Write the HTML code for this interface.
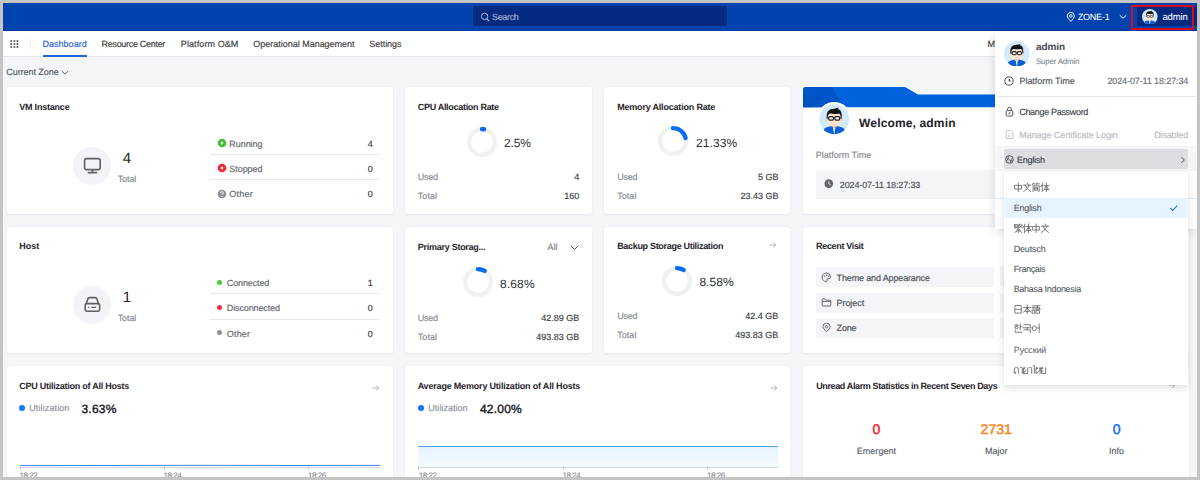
<!DOCTYPE html>
<html><head><meta charset="utf-8"><style>
html,body{margin:0;padding:0;}
body{width:1200px;height:480px;position:relative;overflow:hidden;background:#c4c4c4;font-family:"Liberation Sans", sans-serif;}
.t{position:absolute;white-space:pre;line-height:0;font-family:"Liberation Sans", sans-serif;text-rendering:geometricPrecision;}
svg{display:block}
</style></head><body>
<div style="position:absolute;left:3px;top:3px;width:1194px;height:28px;background:#0043ae;"></div>
<div style="position:absolute;left:3px;top:30px;width:1194px;height:1px;background:#003a9c;"></div>
<div style="position:absolute;left:473px;top:6.2px;width:254px;height:19.8px;background:#052b80;border-radius:1px;"></div>
<svg style="position:absolute;left:480px;top:12px;" width="10" height="10" viewBox="0 0 10 10"><circle cx="4.6" cy="4.4" r="3.2" fill="none" stroke="#a9b6d6" stroke-width="1"/><path d="M6.9 6.8 L9 8.9" stroke="#a9b6d6" stroke-width="1.1" stroke-linecap="round"/></svg>
<div class="t" style="left:492.05px;top:16.90px;font-size:9px;font-weight:normal;color:#a3b1d4;letter-spacing:-0.344px;-webkit-text-stroke:0.16px #a3b1d4;">Search</div>
<svg style="position:absolute;left:1066px;top:12px;" width="10" height="10" viewBox="0 0 10 10"><path d="M4.8 9.4 C2.4 7 1.3 5.3 1.3 3.9 A3.5 3.5 0 0 1 8.3 3.9 C8.3 5.3 7.2 7 4.8 9.4 Z" fill="none" stroke="#fff" stroke-width="0.95"/><circle cx="4.8" cy="4" r="1.3" fill="none" stroke="#fff" stroke-width="0.9"/></svg>
<div class="t" style="left:1077.85px;top:16.70px;font-size:9px;font-weight:normal;color:#ffffff;letter-spacing:-0.241px;-webkit-text-stroke:0.05px #ffffff;">ZONE-1</div>
<svg style="position:absolute;left:1119px;top:14px;" width="8" height="6" viewBox="0 0 8 6"><path d="M1 1.5 L4 4.3 L7 1.5" fill="none" stroke="#fff" stroke-width="1" stroke-linecap="round"/></svg>
<div style="position:absolute;left:1137px;top:7px;width:60px;height:19px;background:#032a7d;"></div>
<svg style="position:absolute;left:1142.2px;top:8.599999999999998px" width="15.6" height="15.6" viewBox="0.0 0.0 32.0 32.0"><defs><clipPath id="c11500164"><circle cx="16" cy="16" r="16"/></clipPath></defs>
<circle cx="16" cy="16" r="16" fill="#d2ebfb"/>
<g clip-path="url(#c11500164)">
<path d="M3.5 34 L4.5 27.5 Q5.5 25.2 9 24.4 L13 23.2 L16 24.2 L19 23.2 L23 24.4 Q26.5 25.2 27.5 27.5 L28.5 34 Z" fill="#0c5fd7"/>
<path d="M14.6 24 L16 33 L17.4 24 L16 25 Z" fill="#e9f3fc"/>
<path d="M12.6 19.5 L12.6 23.4 Q16 26.4 19.4 23.4 L19.4 19.5 Z" fill="#f2c5a2"/>
<path d="M8.6 12 Q8.6 6.8 16 6.8 Q23.4 6.8 23.4 12 L23.4 16.5 Q23.4 23 16 23 Q8.6 23 8.6 16.5 Z" fill="#fce5d3"/>
<ellipse cx="8.2" cy="16.4" rx="1.2" ry="1.8" fill="#f6cfb2"/>
<ellipse cx="23.8" cy="16.4" rx="1.2" ry="1.8" fill="#f6cfb2"/>
<path d="M8 15.5 Q7.4 9.5 9.8 6.9 Q12 4.4 16.5 4.8 Q19 4.2 20.6 3.6 Q20.4 4.8 19.8 5.2 Q22.8 5.6 23.6 8.6 Q24.4 11.5 24 15.5 L23.2 15.5 Q23 11.2 21.4 9.8 Q17.5 11 11.2 10 Q9.2 11 8.8 15.5 Z" fill="#141414"/>
<rect x="10.1" y="13.3" width="5.2" height="3.8" rx="1.5" fill="#f4f6f8" stroke="#1e1e1e" stroke-width="1.3"/>
<rect x="16.7" y="13.3" width="5.2" height="3.8" rx="1.5" fill="#f4f6f8" stroke="#1e1e1e" stroke-width="1.3"/>
<path d="M15.3 14.6 L16.7 14.6 M8.6 14.4 L10.1 14.6 M21.9 14.6 L23.4 14.4" stroke="#1e1e1e" stroke-width="0.9"/>
<path d="M15.4 19.6 Q16 20.1 16.6 19.6" fill="none" stroke="#e0a88a" stroke-width="0.5"/>
</g></svg>
<div class="t" style="left:1162.43px;top:17.70px;font-size:9.5px;font-weight:normal;color:#ffffff;letter-spacing:-0.155px;-webkit-text-stroke:0.05px #ffffff;">admin</div>
<div style="position:absolute;left:3px;top:31px;width:1194px;height:25px;background:#ffffff;"></div>
<div style="position:absolute;left:3px;top:56px;width:1194px;height:1px;background:#e4e6eb;"></div>
<svg style="position:absolute;left:9px;top:39px;" width="11" height="11" viewBox="0 0 11 11"><rect x="1.4999999999999998" y="1.3" width="1.6" height="1.6" fill="#3a3a3a"/><rect x="1.4999999999999998" y="4.2" width="1.6" height="1.6" fill="#3a3a3a"/><rect x="1.4999999999999998" y="7.2" width="1.6" height="1.6" fill="#3a3a3a"/><rect x="4.6000000000000005" y="1.3" width="1.6" height="1.6" fill="#3a3a3a"/><rect x="4.6000000000000005" y="4.2" width="1.6" height="1.6" fill="#3a3a3a"/><rect x="4.6000000000000005" y="7.2" width="1.6" height="1.6" fill="#3a3a3a"/><rect x="7.6000000000000005" y="1.3" width="1.6" height="1.6" fill="#3a3a3a"/><rect x="7.6000000000000005" y="4.2" width="1.6" height="1.6" fill="#3a3a3a"/><rect x="7.6000000000000005" y="7.2" width="1.6" height="1.6" fill="#3a3a3a"/></svg>
<div style="position:absolute;left:29.5px;top:39px;width:1.5px;height:8.299999999999997px;background:#e9eaee;"></div>
<div class="t" style="left:42.55px;top:44.00px;font-size:9px;font-weight:normal;color:#1f65d6;letter-spacing:0.010px;-webkit-text-stroke:0.16px #1f65d6;">Dashboard</div>
<div style="position:absolute;left:43px;top:55px;width:43.5px;height:2px;background:#1f65d6;"></div>
<div class="t" style="left:101.55px;top:44.00px;font-size:9px;font-weight:normal;color:#3c3c3c;letter-spacing:-0.303px;-webkit-text-stroke:0.16px #3c3c3c;">Resource Center</div>
<div class="t" style="left:180.85px;top:44.00px;font-size:9px;font-weight:normal;color:#3c3c3c;letter-spacing:0.090px;-webkit-text-stroke:0.16px #3c3c3c;">Platform O&M</div>
<div class="t" style="left:253.35px;top:44.00px;font-size:9px;font-weight:normal;color:#3c3c3c;letter-spacing:-0.017px;-webkit-text-stroke:0.16px #3c3c3c;">Operational Management</div>
<div class="t" style="left:369.25px;top:44.00px;font-size:9px;font-weight:normal;color:#3c3c3c;letter-spacing:-0.032px;-webkit-text-stroke:0.16px #3c3c3c;">Settings</div>
<div class="t" style="left:987.45px;top:44.20px;font-size:9px;font-weight:normal;color:#3c3c3c;letter-spacing:0.000px;-webkit-text-stroke:0.16px #3c3c3c;">M</div>
<div style="position:absolute;left:3px;top:57px;width:1194px;height:420px;background:#f4f6fa;"></div>
<div class="t" style="left:6.25px;top:72.30px;font-size:9px;font-weight:normal;color:#555a62;letter-spacing:-0.056px;-webkit-text-stroke:0.16px #555a62;">Current Zone</div>
<svg style="position:absolute;left:61px;top:70px;" width="8" height="6" viewBox="0 0 8 6"><path d="M1 1.3 L4 4.2 L7 1.3" fill="none" stroke="#555" stroke-width="1" stroke-linecap="round"/></svg>
<div style="position:absolute;left:7px;top:87px;width:385.5px;height:127px;background:#fff;border-radius:3px;box-shadow:0 0.5px 2px rgba(30,40,60,0.08);"></div>
<div style="position:absolute;left:405px;top:87px;width:186.70000000000005px;height:127px;background:#fff;border-radius:3px;box-shadow:0 0.5px 2px rgba(30,40,60,0.08);"></div>
<div style="position:absolute;left:604.2px;top:87px;width:186.19999999999993px;height:127px;background:#fff;border-radius:3px;box-shadow:0 0.5px 2px rgba(30,40,60,0.08);"></div>
<div style="position:absolute;left:803px;top:94.5px;width:386px;height:119.5px;background:#fff;border-radius:3px;box-shadow:0 0.5px 2px rgba(30,40,60,0.08);"></div>
<div style="position:absolute;left:7px;top:226.7px;width:385.5px;height:126.60000000000002px;background:#fff;border-radius:3px;box-shadow:0 0.5px 2px rgba(30,40,60,0.08);"></div>
<div style="position:absolute;left:405px;top:226.7px;width:186.70000000000005px;height:126.60000000000002px;background:#fff;border-radius:3px;box-shadow:0 0.5px 2px rgba(30,40,60,0.08);"></div>
<div style="position:absolute;left:604.2px;top:226.7px;width:186.19999999999993px;height:126.60000000000002px;background:#fff;border-radius:3px;box-shadow:0 0.5px 2px rgba(30,40,60,0.08);"></div>
<div style="position:absolute;left:803px;top:226.7px;width:386px;height:126.60000000000002px;background:#fff;border-radius:3px;box-shadow:0 0.5px 2px rgba(30,40,60,0.08);"></div>
<div style="position:absolute;left:7px;top:365.8px;width:385.5px;height:134.2px;background:#fff;border-radius:3px;box-shadow:0 0.5px 2px rgba(30,40,60,0.08);"></div>
<div style="position:absolute;left:405px;top:365.8px;width:385.4px;height:134.2px;background:#fff;border-radius:3px;box-shadow:0 0.5px 2px rgba(30,40,60,0.08);"></div>
<div style="position:absolute;left:803px;top:365.8px;width:386px;height:134.2px;background:#fff;border-radius:3px;box-shadow:0 0.5px 2px rgba(30,40,60,0.08);"></div>
<div class="t" style="left:19.25px;top:107.00px;font-size:9px;font-weight:bold;color:#1f2329;letter-spacing:-0.211px;">VM Instance</div>
<div style="position:absolute;left:73.2px;top:146.6px;width:38px;height:38px;border-radius:50%;background:#f3f4f7"></div>
<svg style="position:absolute;left:83px;top:157px;" width="19" height="17" viewBox="0 0 19 17"><rect x="1.6" y="1.6" width="15.6" height="11" rx="2" fill="none" stroke="#5d6168" stroke-width="1.6"/><path d="M9.4 12.8 L9.4 15.6 M5.2 15.6 L13.6 15.6" stroke="#5d6168" stroke-width="1.6" stroke-linecap="round"/></svg>
<div class="t" style="left:122.73px;top:158.75px;font-size:15px;font-weight:normal;color:#1f2329;letter-spacing:0.000px;">4</div>
<div class="t" style="left:117.65px;top:178.50px;font-size:9px;font-weight:normal;color:#868a92;letter-spacing:-0.076px;-webkit-text-stroke:0.16px #868a92;">Total</div>
<svg style="position:absolute;left:217.3px;top:138.0px;" width="10" height="10" viewBox="0 0 10 10"><circle cx="5" cy="5" r="4.3" fill="#42c23b"/><path d="M3.9 3.2 L6.6 5 L3.9 6.8 Z" fill="#fff"/></svg>
<div class="t" style="left:229.35px;top:143.60px;font-size:9px;font-weight:normal;color:#63676e;letter-spacing:-0.070px;-webkit-text-stroke:0.16px #63676e;">Running</div>
<div class="t" style="left:367.74px;top:143.60px;font-size:9px;font-weight:normal;color:#3a3d42;letter-spacing:0.000px;-webkit-text-stroke:0.16px #3a3d42;">4</div>
<div style="position:absolute;left:209.8px;top:154.0px;width:170.2px;height:1.0px;background:#e6e8ec;"></div>
<svg style="position:absolute;left:217.3px;top:163.3px;" width="10" height="10" viewBox="0 0 10 10"><circle cx="5" cy="5" r="4.3" fill="#f2293a"/><rect x="3.9" y="3.9" width="2.2" height="2.2" fill="#fff"/></svg>
<div class="t" style="left:229.35px;top:168.90px;font-size:9px;font-weight:normal;color:#63676e;letter-spacing:-0.070px;-webkit-text-stroke:0.16px #63676e;">Stopped</div>
<div class="t" style="left:367.74px;top:168.90px;font-size:9px;font-weight:normal;color:#3a3d42;letter-spacing:0.000px;-webkit-text-stroke:0.16px #3a3d42;">0</div>
<div style="position:absolute;left:209.8px;top:179.4px;width:170.2px;height:1.0px;background:#e6e8ec;"></div>
<svg style="position:absolute;left:217.3px;top:188.6px;" width="10" height="10" viewBox="0 0 10 10"><circle cx="5" cy="5" r="4.3" fill="#8c8f94"/><path d="M3.6 4 Q3.6 2.6 5 2.6 Q6.4 2.6 6.4 3.9 Q6.4 4.7 5 5.3 L5 6" fill="none" stroke="#fff" stroke-width="0.9"/><circle cx="5" cy="7.3" r="0.55" fill="#fff"/></svg>
<div class="t" style="left:229.35px;top:194.20px;font-size:9px;font-weight:normal;color:#63676e;letter-spacing:0.199px;-webkit-text-stroke:0.16px #63676e;">Other</div>
<div class="t" style="left:367.74px;top:194.20px;font-size:9px;font-weight:normal;color:#3a3d42;letter-spacing:0.000px;-webkit-text-stroke:0.16px #3a3d42;">0</div>
<div class="t" style="left:19.25px;top:246.40px;font-size:9px;font-weight:bold;color:#1f2329;letter-spacing:0.003px;">Host</div>
<div style="position:absolute;left:73.2px;top:286.0px;width:38px;height:38px;border-radius:50%;background:#f3f4f7"></div>
<svg style="position:absolute;left:83px;top:296.4px;" width="19" height="17" viewBox="0 0 19 17"><path d="M3.2 8 L5 2.6 Q5.4 1.6 6.5 1.6 L12.3 1.6 Q13.4 1.6 13.8 2.6 L15.6 8" fill="none" stroke="#5d6168" stroke-width="1.6"/><rect x="2.2" y="7.6" width="14.4" height="7.6" rx="1.6" fill="none" stroke="#5d6168" stroke-width="1.6"/><path d="M5.2 11.4 L6.2 11.4 M8.4 11.4 L13.2 11.4" stroke="#5d6168" stroke-width="1.4"/></svg>
<div class="t" style="left:122.73px;top:298.15px;font-size:15px;font-weight:normal;color:#1f2329;letter-spacing:0.000px;">1</div>
<div class="t" style="left:117.65px;top:317.90px;font-size:9px;font-weight:normal;color:#868a92;letter-spacing:-0.076px;-webkit-text-stroke:0.16px #868a92;">Total</div>
<div style="position:absolute;left:217.2px;top:279.59999999999997px;width:5px;height:5px;border-radius:50%;background:#4cc93c"></div>
<div class="t" style="left:226.75px;top:283.00px;font-size:9px;font-weight:normal;color:#63676e;letter-spacing:-0.117px;-webkit-text-stroke:0.16px #63676e;">Connected</div>
<div class="t" style="left:367.74px;top:283.00px;font-size:9px;font-weight:normal;color:#3a3d42;letter-spacing:0.000px;-webkit-text-stroke:0.16px #3a3d42;">1</div>
<div style="position:absolute;left:209.8px;top:293.4px;width:170.2px;height:1.0px;background:#e6e8ec;"></div>
<div style="position:absolute;left:217.2px;top:304.9px;width:5px;height:5px;border-radius:50%;background:#f2293a"></div>
<div class="t" style="left:226.75px;top:308.30px;font-size:9px;font-weight:normal;color:#63676e;letter-spacing:-0.112px;-webkit-text-stroke:0.16px #63676e;">Disconnected</div>
<div class="t" style="left:367.74px;top:308.30px;font-size:9px;font-weight:normal;color:#3a3d42;letter-spacing:0.000px;-webkit-text-stroke:0.16px #3a3d42;">0</div>
<div style="position:absolute;left:209.8px;top:318.79999999999995px;width:170.2px;height:1.0px;background:#e6e8ec;"></div>
<div style="position:absolute;left:217.2px;top:330.2px;width:5px;height:5px;border-radius:50%;background:#8c8f94"></div>
<div class="t" style="left:226.75px;top:333.60px;font-size:9px;font-weight:normal;color:#63676e;letter-spacing:0.199px;-webkit-text-stroke:0.16px #63676e;">Other</div>
<div class="t" style="left:367.74px;top:333.60px;font-size:9px;font-weight:normal;color:#3a3d42;letter-spacing:0.000px;-webkit-text-stroke:0.16px #3a3d42;">0</div>
<div class="t" style="left:417.75px;top:107.30px;font-size:9px;font-weight:bold;color:#1f2329;letter-spacing:-0.299px;">CPU Allocation Rate</div>
<svg style="position:absolute;left:465.6px;top:125.6px;" width="32" height="32" viewBox="0 0 32 32"><circle cx="16" cy="16" r="12.9" fill="none" stroke="#f0f1f3" stroke-width="4.4"/><path d="M16 3.0999999999999996 A12.9 12.9 0 0 1 18.018 3.259" fill="none" stroke="#0a6cf5" stroke-width="4.4" stroke-linecap="round"/></svg>
<div class="t" style="left:503.90px;top:142.80px;font-size:12px;font-weight:normal;color:#2b2f36;letter-spacing:-0.093px;">2.5%</div>
<div class="t" style="left:417.75px;top:177.00px;font-size:9px;font-weight:normal;color:#868a92;letter-spacing:-0.235px;-webkit-text-stroke:0.16px #868a92;">Used</div>
<div class="t" style="left:574.34px;top:177.00px;font-size:9px;font-weight:normal;color:#3a3d42;letter-spacing:0.000px;-webkit-text-stroke:0.16px #3a3d42;">4</div>
<div class="t" style="left:417.75px;top:195.70px;font-size:9px;font-weight:normal;color:#868a92;letter-spacing:0.074px;-webkit-text-stroke:0.16px #868a92;">Total</div>
<div class="t" style="left:564.33px;top:195.70px;font-size:9px;font-weight:normal;color:#3a3d42;letter-spacing:0.000px;-webkit-text-stroke:0.16px #3a3d42;">160</div>
<div class="t" style="left:617.15px;top:107.30px;font-size:9px;font-weight:bold;color:#1f2329;letter-spacing:-0.189px;">Memory Allocation Rate</div>
<svg style="position:absolute;left:657.4px;top:125.4px;" width="32" height="32" viewBox="0 0 32 32"><circle cx="16" cy="16" r="12.9" fill="none" stroke="#f0f1f3" stroke-width="4.4"/><path d="M16 3.0999999999999996 A12.9 12.9 0 0 1 28.559 13.052" fill="none" stroke="#0a6cf5" stroke-width="4.4" stroke-linecap="round"/></svg>
<div class="t" style="left:696.00px;top:142.50px;font-size:12px;font-weight:normal;color:#2b2f36;letter-spacing:0.075px;">21.33%</div>
<div class="t" style="left:617.15px;top:177.00px;font-size:9px;font-weight:normal;color:#868a92;letter-spacing:-0.235px;-webkit-text-stroke:0.16px #868a92;">Used</div>
<div class="t" style="left:757.94px;top:177.00px;font-size:9px;font-weight:normal;color:#3a3d42;letter-spacing:0.000px;-webkit-text-stroke:0.16px #3a3d42;">5 GB</div>
<div class="t" style="left:617.15px;top:195.70px;font-size:9px;font-weight:normal;color:#868a92;letter-spacing:0.074px;-webkit-text-stroke:0.16px #868a92;">Total</div>
<div class="t" style="left:740.43px;top:195.70px;font-size:9px;font-weight:normal;color:#3a3d42;letter-spacing:0.000px;-webkit-text-stroke:0.16px #3a3d42;">23.43 GB</div>
<div class="t" style="left:417.75px;top:247.30px;font-size:9px;font-weight:bold;color:#1f2329;letter-spacing:-0.264px;">Primary Storag...</div>
<div class="t" style="left:547.45px;top:247.30px;font-size:9px;font-weight:normal;color:#7d8189;letter-spacing:0.000px;-webkit-text-stroke:0.16px #7d8189;">All</div>
<svg style="position:absolute;left:570px;top:245px;" width="9" height="6" viewBox="0 0 9 6"><path d="M1.2 1.3 L4.5 4.5 L7.8 1.3" fill="none" stroke="#555" stroke-width="1" stroke-linecap="round"/></svg>
<svg style="position:absolute;left:461.5px;top:266.2px;" width="32" height="32" viewBox="0 0 32 32"><circle cx="16" cy="16" r="12.9" fill="none" stroke="#f0f1f3" stroke-width="4.4"/><path d="M16 3.0999999999999996 A12.9 12.9 0 0 1 22.692 4.971" fill="none" stroke="#0a6cf5" stroke-width="4.4" stroke-linecap="round"/></svg>
<div class="t" style="left:500.10px;top:283.80px;font-size:12px;font-weight:normal;color:#2b2f36;letter-spacing:0.112px;">8.68%</div>
<div class="t" style="left:417.75px;top:317.50px;font-size:9px;font-weight:normal;color:#868a92;letter-spacing:-0.235px;-webkit-text-stroke:0.16px #868a92;">Used</div>
<div class="t" style="left:541.33px;top:317.50px;font-size:9px;font-weight:normal;color:#3a3d42;letter-spacing:0.000px;-webkit-text-stroke:0.16px #3a3d42;">42.89 GB</div>
<div class="t" style="left:417.75px;top:336.70px;font-size:9px;font-weight:normal;color:#868a92;letter-spacing:0.074px;-webkit-text-stroke:0.16px #868a92;">Total</div>
<div class="t" style="left:536.33px;top:336.70px;font-size:9px;font-weight:normal;color:#3a3d42;letter-spacing:0.000px;-webkit-text-stroke:0.16px #3a3d42;">493.83 GB</div>
<div class="t" style="left:617.15px;top:246.20px;font-size:9px;font-weight:bold;color:#1f2329;letter-spacing:-0.309px;">Backup Storage Utilization</div>
<svg style="position:absolute;left:768px;top:241px;" width="10" height="8" viewBox="0 0 10 8"><path d="M1.6 4 L7.8 4 M5.2 1.4 L7.8 4 L5.2 6.6" fill="none" stroke="#a8acb2" stroke-width="0.9"/></svg>
<svg style="position:absolute;left:660.55px;top:265px;" width="32" height="32" viewBox="0 0 32 32"><circle cx="16" cy="16" r="12.9" fill="none" stroke="#f0f1f3" stroke-width="4.4"/><path d="M16 3.0999999999999996 A12.9 12.9 0 0 1 22.622 4.930" fill="none" stroke="#0a6cf5" stroke-width="4.4" stroke-linecap="round"/></svg>
<div class="t" style="left:699.40px;top:282.30px;font-size:12px;font-weight:normal;color:#2b2f36;letter-spacing:0.037px;">8.58%</div>
<div class="t" style="left:617.15px;top:316.20px;font-size:9px;font-weight:normal;color:#868a92;letter-spacing:-0.235px;-webkit-text-stroke:0.16px #868a92;">Used</div>
<div class="t" style="left:745.33px;top:316.20px;font-size:9px;font-weight:normal;color:#3a3d42;letter-spacing:0.000px;-webkit-text-stroke:0.16px #3a3d42;">42.4 GB</div>
<div class="t" style="left:617.15px;top:335.20px;font-size:9px;font-weight:normal;color:#868a92;letter-spacing:0.074px;-webkit-text-stroke:0.16px #868a92;">Total</div>
<div class="t" style="left:735.33px;top:335.20px;font-size:9px;font-weight:normal;color:#3a3d42;letter-spacing:0.000px;-webkit-text-stroke:0.16px #3a3d42;">493.83 GB</div>
<svg style="position:absolute;left:803px;top:87px;" width="386" height="21" viewBox="0 0 386 21"><defs><clipPath id="wb"><path d="M0 3 Q0 0 3 0 L386 0 L386 21 L0 21 Z"/></clipPath></defs><g clip-path="url(#wb)"><path d="M0 0 L102 0 L115 7.5 L386 7.5 L386 20.3 L0 20.3 Z" fill="#0063db"/><path d="M0 0 L29 0 L41 20.3 L0 20.3 Z" fill="#0055c9"/><path d="M0 20.3 L10 20.3 L18 8 L0 8 Z" fill="#0050bf" opacity="0.5"/></g></svg>
<svg style="position:absolute;left:816.8px;top:101.8px" width="34.4" height="34.4" viewBox="-2.3466666666666676 -2.3466666666666676 36.693333333333335 36.693333333333335"><circle cx="16" cy="16" r="18.346666666666668" fill="#fff"/><defs><clipPath id="c83401190"><circle cx="16" cy="16" r="16"/></clipPath></defs>
<circle cx="16" cy="16" r="16" fill="#d2ebfb"/>
<g clip-path="url(#c83401190)">
<path d="M3.5 34 L4.5 27.5 Q5.5 25.2 9 24.4 L13 23.2 L16 24.2 L19 23.2 L23 24.4 Q26.5 25.2 27.5 27.5 L28.5 34 Z" fill="#0c5fd7"/>
<path d="M14.6 24 L16 33 L17.4 24 L16 25 Z" fill="#e9f3fc"/>
<path d="M12.6 19.5 L12.6 23.4 Q16 26.4 19.4 23.4 L19.4 19.5 Z" fill="#f2c5a2"/>
<path d="M8.6 12 Q8.6 6.8 16 6.8 Q23.4 6.8 23.4 12 L23.4 16.5 Q23.4 23 16 23 Q8.6 23 8.6 16.5 Z" fill="#fce5d3"/>
<ellipse cx="8.2" cy="16.4" rx="1.2" ry="1.8" fill="#f6cfb2"/>
<ellipse cx="23.8" cy="16.4" rx="1.2" ry="1.8" fill="#f6cfb2"/>
<path d="M8 15.5 Q7.4 9.5 9.8 6.9 Q12 4.4 16.5 4.8 Q19 4.2 20.6 3.6 Q20.4 4.8 19.8 5.2 Q22.8 5.6 23.6 8.6 Q24.4 11.5 24 15.5 L23.2 15.5 Q23 11.2 21.4 9.8 Q17.5 11 11.2 10 Q9.2 11 8.8 15.5 Z" fill="#141414"/>
<rect x="10.1" y="13.3" width="5.2" height="3.8" rx="1.5" fill="#f4f6f8" stroke="#1e1e1e" stroke-width="1.3"/>
<rect x="16.7" y="13.3" width="5.2" height="3.8" rx="1.5" fill="#f4f6f8" stroke="#1e1e1e" stroke-width="1.3"/>
<path d="M15.3 14.6 L16.7 14.6 M8.6 14.4 L10.1 14.6 M21.9 14.6 L23.4 14.4" stroke="#1e1e1e" stroke-width="0.9"/>
<path d="M15.4 19.6 Q16 20.1 16.6 19.6" fill="none" stroke="#e0a88a" stroke-width="0.5"/>
</g></svg>
<div class="t" style="left:859.10px;top:123.30px;font-size:12px;font-weight:bold;color:#1f2329;letter-spacing:0.146px;">Welcome, admin</div>
<div class="t" style="left:815.85px;top:155.30px;font-size:9px;font-weight:normal;color:#868a92;letter-spacing:-0.017px;-webkit-text-stroke:0.16px #868a92;">Platform Time</div>
<div style="position:absolute;left:815.8px;top:170px;width:360.20000000000005px;height:28.69999999999999px;background:#f4f5f8;"></div>
<svg style="position:absolute;left:824px;top:179px;" width="10" height="10" viewBox="0 0 10 10"><circle cx="4.8" cy="4.6" r="4.3" fill="#62666d"/><path d="M4.8 2.4 L4.8 4.8 L6.6 5.9" fill="none" stroke="#fff" stroke-width="0.9"/></svg>
<div class="t" style="left:839.85px;top:184.80px;font-size:9px;font-weight:normal;color:#4b4f56;letter-spacing:-0.133px;-webkit-text-stroke:0.16px #4b4f56;">2024-07-11 18:27:33</div>
<div class="t" style="left:816.05px;top:246.20px;font-size:9px;font-weight:bold;color:#1f2329;letter-spacing:-0.332px;">Recent Visit</div>
<div style="position:absolute;left:816.2px;top:267.0px;width:177.79999999999995px;height:20.30000000000001px;background:#f4f5f8;"></div>
<div style="position:absolute;left:1000px;top:267.0px;width:176px;height:20.30000000000001px;background:#f4f5f8;"></div>
<div class="t" style="left:836.55px;top:277.70px;font-size:9px;font-weight:normal;color:#4b4f56;letter-spacing:-0.140px;-webkit-text-stroke:0.16px #4b4f56;">Theme and Appearance</div>
<div style="position:absolute;left:816.2px;top:292.6px;width:177.79999999999995px;height:20.30000000000001px;background:#f4f5f8;"></div>
<div style="position:absolute;left:1000px;top:292.6px;width:176px;height:20.30000000000001px;background:#f4f5f8;"></div>
<div class="t" style="left:836.55px;top:302.70px;font-size:9px;font-weight:normal;color:#4b4f56;letter-spacing:-0.068px;-webkit-text-stroke:0.16px #4b4f56;">Project</div>
<div style="position:absolute;left:816.2px;top:318.2px;width:177.79999999999995px;height:20.30000000000001px;background:#f4f5f8;"></div>
<div style="position:absolute;left:1000px;top:318.2px;width:176px;height:20.30000000000001px;background:#f4f5f8;"></div>
<div class="t" style="left:836.55px;top:328.20px;font-size:9px;font-weight:normal;color:#4b4f56;letter-spacing:-0.169px;-webkit-text-stroke:0.16px #4b4f56;">Zone</div>
<svg style="position:absolute;left:821px;top:272px;" width="11" height="11" viewBox="0 0 11 11"><path d="M5.2 1 A4.3 4.3 0 1 0 5.6 9.6 Q6.6 9.4 6 8.2 Q5.3 6.8 6.8 6.6 L8.2 6.6 Q9.6 6.4 9.5 5 A4.4 4.4 0 0 0 5.2 1 Z" fill="none" stroke="#5d6168" stroke-width="0.95"/><circle cx="3.4" cy="4.2" r="0.75" fill="#5d6168"/><circle cx="5.6" cy="3.2" r="0.75" fill="#5d6168"/><circle cx="7.6" cy="4.2" r="0.7" fill="#5d6168"/></svg>
<svg style="position:absolute;left:821px;top:298px;" width="11" height="9" viewBox="0 0 11 9"><path d="M1.2 1.6 Q1.2 0.9 1.9 0.9 L4.2 0.9 L5.4 2.2 L9.1 2.2 Q9.8 2.2 9.8 2.9 L9.8 7.3 Q9.8 8 9.1 8 L1.9 8 Q1.2 8 1.2 7.3 Z M1.2 3.4 L9.8 3.4" fill="none" stroke="#5d6168" stroke-width="0.95"/></svg>
<svg style="position:absolute;left:821.5px;top:323px;" width="10" height="10" viewBox="0 0 10 10"><path d="M4.5 8.7 C2.3 6.6 1 5 1 3.6 A3.5 3.5 0 0 1 8 3.6 C8 5 6.7 6.6 4.5 8.7 Z" fill="none" stroke="#5d6168" stroke-width="0.95"/><circle cx="4.5" cy="3.7" r="1.2" fill="none" stroke="#5d6168" stroke-width="0.9"/></svg>
<div class="t" style="left:19.30px;top:386.00px;font-size:9px;font-weight:bold;color:#1f2329;letter-spacing:-0.247px;">CPU Utilization of All Hosts</div>
<svg style="position:absolute;left:370.8px;top:384.3px;" width="10" height="8" viewBox="0 0 10 8"><path d="M1.6 4 L7.8 4 M5.2 1.4 L7.8 4 L5.2 6.6" fill="none" stroke="#a8acb2" stroke-width="0.9"/></svg>
<div style="position:absolute;left:19.2px;top:405.3px;width:6px;height:6px;border-radius:50%;background:#1677ff"></div>
<div class="t" style="left:29.25px;top:407.80px;font-size:9px;font-weight:normal;color:#8d9198;letter-spacing:0.109px;-webkit-text-stroke:0.16px #8d9198;">Utilization</div>
<div class="t" style="left:81.40px;top:408.60px;font-size:12px;font-weight:normal;color:#111318;letter-spacing:0.262px;-webkit-text-stroke:0.35px #111318;">3.63%</div>
<svg style="position:absolute;left:19px;top:462px;" width="362" height="5" viewBox="0 0 362 5"><path d="M0.8 3.6 L90 3.5 L180 3.3 L270 3.5 L361 3.4" fill="none" stroke="#3b87f0" stroke-width="1"/></svg>
<div style="position:absolute;left:19.8px;top:467.3px;width:360.2px;height:1.0px;background:#d4d6da;"></div>
<div style="position:absolute;left:19.8px;top:467.3px;width:0.8000000000000007px;height:3.1999999999999886px;background:#c8cacf;"></div>
<div style="position:absolute;left:163.7px;top:467.3px;width:0.8000000000000114px;height:3.1999999999999886px;background:#c8cacf;"></div>
<div style="position:absolute;left:307.7px;top:467.3px;width:0.8000000000000114px;height:3.1999999999999886px;background:#c8cacf;"></div>
<div class="t" style="left:19.60px;top:476.30px;font-size:8px;font-weight:normal;color:#8d9198;letter-spacing:-0.453px;-webkit-text-stroke:0.16px #8d9198;">18:22</div>
<div class="t" style="left:163.60px;top:476.30px;font-size:8px;font-weight:normal;color:#8d9198;letter-spacing:-0.453px;-webkit-text-stroke:0.16px #8d9198;">18:24</div>
<div class="t" style="left:308.00px;top:476.30px;font-size:8px;font-weight:normal;color:#8d9198;letter-spacing:-0.453px;-webkit-text-stroke:0.16px #8d9198;">18:26</div>
<div class="t" style="left:417.65px;top:385.90px;font-size:9px;font-weight:bold;color:#1f2329;letter-spacing:-0.189px;">Average Memory Utilization of All Hosts</div>
<svg style="position:absolute;left:769.3px;top:384.3px;" width="10" height="8" viewBox="0 0 10 8"><path d="M1.6 4 L7.8 4 M5.2 1.4 L7.8 4 L5.2 6.6" fill="none" stroke="#a8acb2" stroke-width="0.9"/></svg>
<div style="position:absolute;left:418.1px;top:405px;width:5.5px;height:5.5px;border-radius:50%;background:#1677ff"></div>
<div class="t" style="left:428.30px;top:408.00px;font-size:9px;font-weight:normal;color:#8d9198;letter-spacing:0.029px;-webkit-text-stroke:0.16px #8d9198;">Utilization</div>
<div class="t" style="left:480.00px;top:408.60px;font-size:12px;font-weight:normal;color:#111318;letter-spacing:0.195px;-webkit-text-stroke:0.35px #111318;">42.00%</div>
<div style="position:absolute;left:418.3px;top:446.6px;width:360px;height:20.6px;background:linear-gradient(#e4f3fe,#f7fbff)"></div>
<div style="position:absolute;left:418.3px;top:445.6px;width:359.99999999999994px;height:1.1999999999999886px;background:#559bf2;"></div>
<div style="position:absolute;left:418.3px;top:467px;width:359.99999999999994px;height:1px;background:#d4d6da;"></div>
<div style="position:absolute;left:418.3px;top:467px;width:0.8000000000000114px;height:3.3000000000000114px;background:#c8cacf;"></div>
<div style="position:absolute;left:562.5px;top:467px;width:0.7999999999999545px;height:3.3000000000000114px;background:#c8cacf;"></div>
<div style="position:absolute;left:706.7px;top:467px;width:0.7999999999999545px;height:3.3000000000000114px;background:#c8cacf;"></div>
<div class="t" style="left:418.80px;top:476.30px;font-size:8px;font-weight:normal;color:#8d9198;letter-spacing:-0.453px;-webkit-text-stroke:0.16px #8d9198;">18:22</div>
<div class="t" style="left:562.60px;top:476.30px;font-size:8px;font-weight:normal;color:#8d9198;letter-spacing:-0.453px;-webkit-text-stroke:0.16px #8d9198;">18:24</div>
<div class="t" style="left:707.00px;top:476.30px;font-size:8px;font-weight:normal;color:#8d9198;letter-spacing:-0.453px;-webkit-text-stroke:0.16px #8d9198;">18:26</div>
<div class="t" style="left:816.15px;top:385.90px;font-size:9px;font-weight:bold;color:#1f2329;letter-spacing:-0.366px;">Unread Alarm Statistics in Recent Seven Days</div>
<svg style="position:absolute;left:1166.6px;top:381.4px;" width="10" height="8" viewBox="0 0 10 8"><path d="M1.6 4 L7.8 4 M5.2 1.4 L7.8 4 L5.2 6.6" fill="none" stroke="#a8acb2" stroke-width="0.9"/></svg>
<div class="t" style="left:872.50px;top:429.30px;font-size:14px;font-weight:normal;color:#f5222d;letter-spacing:0.000px;-webkit-text-stroke:0.45px #f5222d;">0</div>
<div class="t" style="left:856.79px;top:450.60px;font-size:9px;font-weight:normal;color:#5c6068;letter-spacing:0.026px;-webkit-text-stroke:0.16px #5c6068;">Emergent</div>
<div class="t" style="left:980.62px;top:429.30px;font-size:14px;font-weight:normal;color:#fa8014;letter-spacing:0.000px;-webkit-text-stroke:0.45px #fa8014;">2731</div>
<div class="t" style="left:984.94px;top:450.60px;font-size:9px;font-weight:normal;color:#5c6068;letter-spacing:0.000px;-webkit-text-stroke:0.16px #5c6068;">Major</div>
<div class="t" style="left:1112.70px;top:429.30px;font-size:14px;font-weight:normal;color:#1270ff;letter-spacing:0.000px;-webkit-text-stroke:0.45px #1270ff;">0</div>
<div class="t" style="left:1109.09px;top:450.60px;font-size:9px;font-weight:normal;color:#5c6068;letter-spacing:0.000px;-webkit-text-stroke:0.16px #5c6068;">Info</div>
<div style="position:absolute;left:995px;top:31px;width:202px;height:197.5px;background:#fff;box-shadow:-2px 3px 8px rgba(0,0,0,0.10)"></div>
<svg style="position:absolute;left:1004.1px;top:40.900000000000006px" width="25.6" height="25.6" viewBox="0.0 0.0 32.0 32.0"><defs><clipPath id="c10169537"><circle cx="16" cy="16" r="16"/></clipPath></defs>
<circle cx="16" cy="16" r="16" fill="#d2ebfb"/>
<g clip-path="url(#c10169537)">
<path d="M3.5 34 L4.5 27.5 Q5.5 25.2 9 24.4 L13 23.2 L16 24.2 L19 23.2 L23 24.4 Q26.5 25.2 27.5 27.5 L28.5 34 Z" fill="#0c5fd7"/>
<path d="M14.6 24 L16 33 L17.4 24 L16 25 Z" fill="#e9f3fc"/>
<path d="M12.6 19.5 L12.6 23.4 Q16 26.4 19.4 23.4 L19.4 19.5 Z" fill="#f2c5a2"/>
<path d="M8.6 12 Q8.6 6.8 16 6.8 Q23.4 6.8 23.4 12 L23.4 16.5 Q23.4 23 16 23 Q8.6 23 8.6 16.5 Z" fill="#fce5d3"/>
<ellipse cx="8.2" cy="16.4" rx="1.2" ry="1.8" fill="#f6cfb2"/>
<ellipse cx="23.8" cy="16.4" rx="1.2" ry="1.8" fill="#f6cfb2"/>
<path d="M8 15.5 Q7.4 9.5 9.8 6.9 Q12 4.4 16.5 4.8 Q19 4.2 20.6 3.6 Q20.4 4.8 19.8 5.2 Q22.8 5.6 23.6 8.6 Q24.4 11.5 24 15.5 L23.2 15.5 Q23 11.2 21.4 9.8 Q17.5 11 11.2 10 Q9.2 11 8.8 15.5 Z" fill="#141414"/>
<rect x="10.1" y="13.3" width="5.2" height="3.8" rx="1.5" fill="#f4f6f8" stroke="#1e1e1e" stroke-width="1.3"/>
<rect x="16.7" y="13.3" width="5.2" height="3.8" rx="1.5" fill="#f4f6f8" stroke="#1e1e1e" stroke-width="1.3"/>
<path d="M15.3 14.6 L16.7 14.6 M8.6 14.4 L10.1 14.6 M21.9 14.6 L23.4 14.4" stroke="#1e1e1e" stroke-width="0.9"/>
<path d="M15.4 19.6 Q16 20.1 16.6 19.6" fill="none" stroke="#e0a88a" stroke-width="0.5"/>
</g></svg>
<div class="t" style="left:1035.90px;top:48.40px;font-size:10px;font-weight:bold;color:#43474e;letter-spacing:-0.063px;">admin</div>
<div class="t" style="left:1036.00px;top:61.80px;font-size:8px;font-weight:normal;color:#8d9198;letter-spacing:-0.229px;-webkit-text-stroke:0.16px #8d9198;">Super Admin</div>
<svg style="position:absolute;left:1004.4px;top:75.8px;" width="10" height="10" viewBox="0 0 10 10"><circle cx="5" cy="5" r="4.1" fill="none" stroke="#4f535a" stroke-width="1"/><path d="M4.6 2.6 L4.6 5.6 L6.6 5.6 Q6.6 3.2 4.6 2.6 Z" fill="#4f535a"/></svg>
<div class="t" style="left:1019.45px;top:81.25px;font-size:9px;font-weight:normal;color:#4f535a;letter-spacing:-0.025px;-webkit-text-stroke:0.16px #4f535a;">Platform Time</div>
<div class="t" style="left:1107.45px;top:81.10px;font-size:9px;font-weight:normal;color:#6b6f76;letter-spacing:-0.111px;-webkit-text-stroke:0.16px #6b6f76;">2024-07-11 18:27:34</div>
<div style="position:absolute;left:996.6px;top:96px;width:200.39999999999998px;height:1px;background:#e6e8ec;"></div>
<svg style="position:absolute;left:1005px;top:106px;" width="9" height="11" viewBox="0 0 9 11"><path d="M2.6 4.6 L2.6 3.2 A1.9 1.9 0 0 1 6.4 3.2 L6.4 4.6" fill="none" stroke="#4f535a" stroke-width="1"/><rect x="1.2" y="4.6" width="6.6" height="5.4" rx="1" fill="none" stroke="#4f535a" stroke-width="1"/><path d="M4.5 6.3 L4.5 8.3 M3.5 7.3 L5.5 7.3" stroke="#4f535a" stroke-width="0.8"/></svg>
<div class="t" style="left:1019.25px;top:112.30px;font-size:9px;font-weight:normal;color:#43474e;letter-spacing:-0.317px;-webkit-text-stroke:0.16px #43474e;">Change Password</div>
<svg style="position:absolute;left:1005px;top:129px;" width="9" height="11" viewBox="0 0 9 11"><path d="M1.3 1.3 L5.3 1.3 L7.8 3.8 L7.8 9.6 L1.3 9.6 Z" fill="none" stroke="#c0c3c8" stroke-width="0.95"/><path d="M3 6 L4.2 6.8 L3 7.6 M4.8 7.8 L6 7.8" fill="none" stroke="#c0c3c8" stroke-width="0.8"/></svg>
<div class="t" style="left:1019.25px;top:135.00px;font-size:9px;font-weight:normal;color:#b9bcc2;letter-spacing:-0.063px;-webkit-text-stroke:0.16px #b9bcc2;">Manage Certificate Login</div>
<div class="t" style="left:1154.15px;top:134.70px;font-size:9px;font-weight:normal;color:#b9bcc2;letter-spacing:-0.132px;-webkit-text-stroke:0.16px #b9bcc2;">Disabled</div>
<div style="position:absolute;left:995px;top:146.25px;width:202px;height:25.0px;background:#f5f6f8;"></div>
<div style="position:absolute;left:1004.2px;top:149.3px;width:183.79999999999995px;height:20.19999999999999px;background:#dcdee2;border-radius:2px;"></div>
<svg style="position:absolute;left:1005px;top:154.7px;" width="9" height="9" viewBox="0 0 9 9"><circle cx="4.5" cy="4.5" r="3.8" fill="none" stroke="#4f535a" stroke-width="1"/><path d="M1.5 6 Q3 4.2 3.4 2.4 Q3.6 1.2 3 0.9 M7.6 3 Q6 4.6 5.6 6.6 Q5.5 7.6 6 8.1 M2 3.6 Q3.8 4 4.6 5 Q5.4 5.8 7.4 5.8" fill="none" stroke="#4f535a" stroke-width="0.9"/></svg>
<div class="t" style="left:1017.05px;top:159.50px;font-size:9px;font-weight:normal;color:#43474e;letter-spacing:-0.254px;-webkit-text-stroke:0.16px #43474e;">English</div>
<svg style="position:absolute;left:1180px;top:155.5px;" width="6" height="8" viewBox="0 0 6 8"><path d="M1.3 1.2 L4.3 4 L1.3 6.8" fill="none" stroke="#4f535a" stroke-width="1"/></svg>
<div style="position:absolute;left:995px;top:198.3px;width:202px;height:1.0px;background:#e6e8ec;"></div>
<div style="position:absolute;left:1004px;top:171.7px;width:184px;height:213px;background:#fff;box-shadow:0 3px 8px rgba(0,0,0,0.12), 0 0 1px rgba(0,0,0,0.06)"></div>
<div style="position:absolute;left:1004px;top:197.5px;width:184px;height:20.099999999999994px;background:#e6f4ff;"></div>
<div class="t" style="left:1013.75px;top:207.80px;font-size:9px;font-weight:normal;color:#53575e;letter-spacing:-0.270px;-webkit-text-stroke:0.08px #53575e;">English</div>
<svg style="position:absolute;left:1169px;top:203.5px;" width="10" height="8" viewBox="0 0 10 8"><path d="M1.3 4.2 L3.7 6.5 L8.2 1.6" fill="none" stroke="#1d6fe8" stroke-width="1.1"/></svg>
<div class="t" style="left:1013.65px;top:248.60px;font-size:9px;font-weight:normal;color:#53575e;letter-spacing:-0.137px;-webkit-text-stroke:0.08px #53575e;">Deutsch</div>
<div class="t" style="left:1013.65px;top:268.50px;font-size:9px;font-weight:normal;color:#53575e;letter-spacing:-0.372px;-webkit-text-stroke:0.08px #53575e;">Français</div>
<div class="t" style="left:1013.65px;top:288.70px;font-size:9px;font-weight:normal;color:#53575e;letter-spacing:-0.297px;-webkit-text-stroke:0.08px #53575e;">Bahasa Indonesia</div>
<div class="t" style="left:1013.85px;top:350.40px;font-size:9px;font-weight:normal;color:#5b5f66;letter-spacing:-0.149px;">Русский</div>
<svg style="position:absolute;left:1014.3px;top:183.4px;overflow:visible" width="37.6" height="12" viewBox="0 0 37.6 12"><g transform="translate(0.0,0) scale(0.86)"><path d="M5 0 L5 10 M1.2 2.8 L8.8 2.8 L8.8 7 L1.2 7 Z" fill="none" stroke="#52565d" stroke-width="0.872093023255814" stroke-linecap="square"/></g><g transform="translate(8.9,0) scale(0.86)"><path d="M5 0 L5.6 1.4 M0.8 2.5 L9.2 2.5 M2.6 2.5 Q4 7 9 9.8 M7.4 2.5 Q6 7 1 9.8" fill="none" stroke="#52565d" stroke-width="0.872093023255814" stroke-linecap="square"/></g><g transform="translate(17.8,0) scale(0.86)"><path d="M2 0 L1 1.6 M1.5 1 L4 1 M6.5 0 L5.5 1.6 M6 1 L9 1 M1.5 3.2 L1.5 10 M2 3.2 L8.6 3.2 L8.6 9.6 L7.6 9.6 M3.6 5 L6.6 5 L6.6 8.4 L3.6 8.4 Z M3.6 6.7 L6.6 6.7" fill="none" stroke="#52565d" stroke-width="0.872093023255814" stroke-linecap="square"/></g><g transform="translate(26.700000000000003,0) scale(0.86)"><path d="M2.6 0 Q1.8 2.6 0.4 4.2 M1.8 2.4 L1.8 10 M3.6 3 L9.6 3 M6.6 0 L6.6 10 M6.4 3.4 Q5.4 6.4 3.4 8.4 M6.8 3.4 Q7.8 6.4 9.8 8.4 M4.8 7.6 L8.4 7.6" fill="none" stroke="#52565d" stroke-width="0.872093023255814" stroke-linecap="square"/></g></svg>
<svg style="position:absolute;left:1014.3px;top:223.5px;overflow:visible" width="37.6" height="12" viewBox="0 0 37.6 12"><g transform="translate(0.0,0) scale(0.86)"><path d="M1 0.5 L1 4.5 M1 0.8 L4.8 0.8 L4.8 4.5 M0.3 2.5 L5.4 2.5 M1.2 4.4 L5 4.4 M6.6 0 Q6.2 1.4 5.8 2 M6.2 1.2 L9.4 1.2 M6.4 1.8 Q7.6 3.6 9.6 4.4 M9 1.8 Q8 3.6 5.8 4.6 M5 5.4 L3 7.2 L7.4 7.2 M6 6.4 L7 7 M5 7.2 L5 10 M1 9.6 L3.4 8.4 M9 9.6 L6.6 8.4" fill="none" stroke="#52565d" stroke-width="0.872093023255814" stroke-linecap="square"/></g><g transform="translate(8.9,0) scale(0.86)"><path d="M2.6 0 Q1.8 2.6 0.4 4.2 M1.8 2.4 L1.8 10 M3.6 3 L9.6 3 M6.6 0 L6.6 10 M6.4 3.4 Q5.4 6.4 3.4 8.4 M6.8 3.4 Q7.8 6.4 9.8 8.4 M4.8 7.6 L8.4 7.6" fill="none" stroke="#52565d" stroke-width="0.872093023255814" stroke-linecap="square"/></g><g transform="translate(17.8,0) scale(0.86)"><path d="M5 0 L5 10 M1.2 2.8 L8.8 2.8 L8.8 7 L1.2 7 Z" fill="none" stroke="#52565d" stroke-width="0.872093023255814" stroke-linecap="square"/></g><g transform="translate(26.700000000000003,0) scale(0.86)"><path d="M5 0 L5.6 1.4 M0.8 2.5 L9.2 2.5 M2.6 2.5 Q4 7 9 9.8 M7.4 2.5 Q6 7 1 9.8" fill="none" stroke="#52565d" stroke-width="0.872093023255814" stroke-linecap="square"/></g></svg>
<svg style="position:absolute;left:1014.3px;top:304.6px;overflow:visible" width="28.700000000000003" height="12" viewBox="0 0 28.700000000000003 12"><g transform="translate(0.0,0) scale(0.86)"><path d="M1.6 0.6 L8.4 0.6 L8.4 9.4 L1.6 9.4 Z M1.6 5 L8.4 5" fill="none" stroke="#52565d" stroke-width="0.872093023255814" stroke-linecap="square"/></g><g transform="translate(8.9,0) scale(0.86)"><path d="M0.8 3 L9.2 3 M5 0 L5 10 M5 3.4 Q3.4 6.6 0.6 8.4 M5 3.4 Q6.6 6.6 9.4 8.4 M3 7.4 L7 7.4" fill="none" stroke="#52565d" stroke-width="0.872093023255814" stroke-linecap="square"/></g><g transform="translate(17.8,0) scale(0.86)"><path d="M0.6 1 L3.6 1 M0.6 2.8 L3.8 2.8 M1 4.6 L3.4 4.6 M1 6.2 L3.4 6.2 L3.4 9.6 L1 9.6 Z M4.6 0.8 L9.6 0.8 M6.8 0.8 L6 4.8 M5 2.8 L8.8 2.8 L8.8 4.8 M4.4 4.8 L9.8 4.8 M5.4 6.4 L9 6.4 L9 9.6 L5.4 9.6 Z" fill="none" stroke="#52565d" stroke-width="0.872093023255814" stroke-linecap="square"/></g></svg>
<svg style="position:absolute;left:1014.3px;top:324.4px;overflow:visible" width="28.700000000000003" height="12" viewBox="0 0 28.700000000000003 12"><g transform="translate(0.0,0) scale(0.86)"><path d="M2.3 0.4 L3.5 0.4 M0.6 1.9 L5.2 1.9 M1.1 4.3 A1.8 1.4 0 1 0 4.7 4.3 A1.8 1.4 0 1 0 1.1 4.3 M7.2 0 L7.2 6.6 M7.2 3.2 L9 3.2 M1.4 7.2 L1.4 9.6 L8.8 9.6" fill="none" stroke="#52565d" stroke-width="0.872093023255814" stroke-linecap="square"/></g><g transform="translate(8.9,0) scale(0.86)"><path d="M1.2 0.8 L8.6 0.8 L8.6 3 M0.2 4.4 L9.8 4.4 M5 4.4 L5 6.2 M1.2 6.8 L8.6 6.8 L8.6 10" fill="none" stroke="#52565d" stroke-width="0.872093023255814" stroke-linecap="square"/></g><g transform="translate(17.8,0) scale(0.86)"><path d="M0.5 5 A2.4 3 0 1 0 5.3 5 A2.4 3 0 1 0 0.5 5 M8.6 0 L8.6 10 M6 4.6 L8.6 4.6" fill="none" stroke="#52565d" stroke-width="0.872093023255814" stroke-linecap="square"/></g></svg>
<svg style="position:absolute;left:1014.3px;top:367px;overflow:visible" width="40" height="8" viewBox="0 0 40 8"><path transform="translate(0,0)" d="M1.1 5.8 m-0.75 0 a0.75 0.75 0 1 0 1.5 0 a0.75 0.75 0 1 0 -1.5 0 M0.35 5.8 L0.35 2.2 Q0.35 0.4 2.4 0.4 Q4.4 0.4 4.4 2.2 L4.4 6.6" fill="none" stroke="#55595f" stroke-width="0.8"/><path transform="translate(5.3,0)" d="M0.3 1.1 Q0.8 0.4 1.9 0.4 Q3 0.4 3 1.6 L3 6.6" fill="none" stroke="#55595f" stroke-width="0.8"/><path transform="translate(9.1,0)" d="M1.1 1.1 m-0.75 0 a0.75 0.75 0 1 0 1.5 0 a0.75 0.75 0 1 0 -1.5 0 M0.35 1.1 L0.35 6.6 L4.6 6.6 L4.6 0.4 M0.6 6.2 L3 2.8" fill="none" stroke="#55595f" stroke-width="0.8"/><path transform="translate(14.7,0)" d="M0.3 1.1 Q0.8 0.4 1.9 0.4 Q3 0.4 3 1.6 L3 6.6" fill="none" stroke="#55595f" stroke-width="0.8"/><path transform="translate(18.5,0)" d="M0.3 -0.8 Q0.6 -1.7 1.7 -1.6 Q2.6 -1.2 1.9 -0.5 L1.9 6.6" fill="none" stroke="#55595f" stroke-width="0.8"/><path transform="translate(21.7,0)" d="M1.1 1.1 m-0.75 0 a0.75 0.75 0 1 0 1.5 0 a0.75 0.75 0 1 0 -1.5 0 M0.35 1.1 L0.35 6.6 Q2.6 5.6 4.4 3.2 L4.4 0.4 L4.4 6.6" fill="none" stroke="#55595f" stroke-width="0.8"/><path transform="translate(27.1,0)" d="M1.1 1.1 m-0.75 0 a0.75 0.75 0 1 0 1.5 0 a0.75 0.75 0 1 0 -1.5 0 M0.35 1.1 L0.35 6.6 L4.6 6.6 L4.6 0.4 M0.35 4.2 L2.2 4.2" fill="none" stroke="#55595f" stroke-width="0.8"/></svg>
<div style="position:absolute;left:0px;top:477px;width:1200px;height:3px;background:#c4c4c4;"></div>
<div style="position:absolute;left:0px;top:0px;width:3px;height:480px;background:#c4c4c4;"></div>
<div style="position:absolute;left:1197px;top:0px;width:3px;height:480px;background:#c4c4c4;"></div>
<div style="position:absolute;left:0px;top:0px;width:1200px;height:3px;background:#c4c4c4;"></div>
<div style="position:absolute;left:1131px;top:5px;width:63px;height:25px;box-sizing:border-box;border:2px solid #dc0a1e;border-radius:1.5px"></div>
</body></html>
